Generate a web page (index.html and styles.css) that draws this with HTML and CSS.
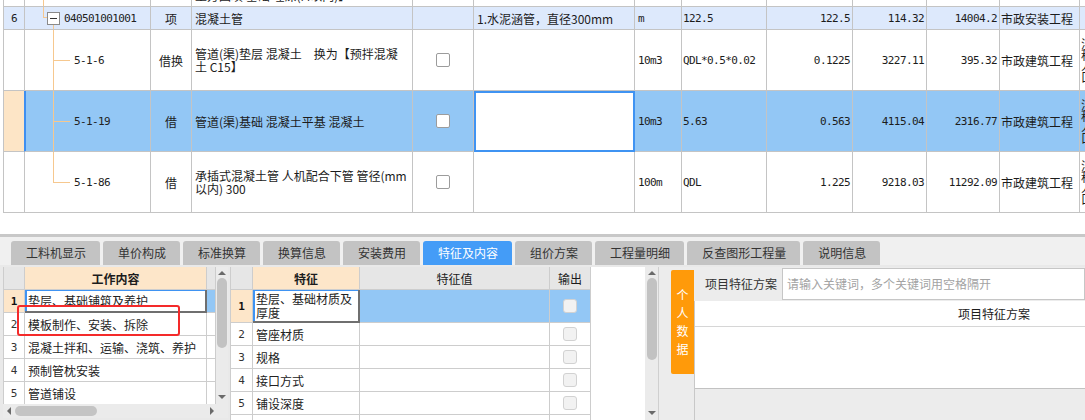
FILE: index.html
```html
<!DOCTYPE html>
<html lang="zh">
<head>
<meta charset="utf-8">
<title>清单定额</title>
<link rel="stylesheet" href="styles.css">
</head>
<body>
<div class="sheet">
  <div class="row r-partial">
    <div class="c"></div>
    <div class="c tree-top"></div>
    <div class="c"></div>
    <div class="c clip"><span class="cliptext">土方回填 基础 埋深(M以内)】</span></div>
    <div class="c"></div><div class="c"></div><div class="c"></div><div class="c"></div>
    <div class="c"></div><div class="c"></div><div class="c"></div><div class="c"></div><div class="c last"></div>
  </div>
  <div class="row r-parent">
    <div class="c center num">6</div>
    <div class="c code-root"><span class="tog"><span class="minus"></span></span><span class="num code">040501001001</span></div>
    <div class="c center">项</div>
    <div class="c">混凝土管</div>
    <div class="c"></div>
    <div class="c">1.水泥涵管，直径300mm</div>
    <div class="c num">m</div>
    <div class="c num tight">122.5</div>
    <div class="c num right">122.5</div>
    <div class="c num right">114.32</div>
    <div class="c num right">14004.2</div>
    <div class="c cat">市政安装工程</div>
    <div class="c last"></div>
  </div>
  <div class="row r-child">
    <div class="c"></div>
    <div class="c code-child"><span class="branch"></span><span class="num code">5-1-6</span></div>
    <div class="c center">借换</div>
    <div class="c wrap">管道(渠)垫层 混凝土　换为【预拌混凝<br>土 C15】</div>
    <div class="c center"><span class="cb"></span></div>
    <div class="c"></div>
    <div class="c num">10m3</div>
    <div class="c num tight">QDL*0.5*0.02</div>
    <div class="c num right">0.1225</div>
    <div class="c num right">3227.11</div>
    <div class="c num right">395.32</div>
    <div class="c cat">市政建筑工程</div>
    <div class="c last"><span class="vtext">浇程人口</span></div>
  </div>
  <div class="row r-child r-sel">
    <div class="c rowhead"></div>
    <div class="c code-child sel-left"><span class="branch"></span><span class="num code">5-1-19</span></div>
    <div class="c center">借</div>
    <div class="c wrap">管道(渠)基础 混凝土平基 混凝土</div>
    <div class="c center"><span class="cb"></span></div>
    <div class="c edit"></div>
    <div class="c num">10m3</div>
    <div class="c num tight">5.63</div>
    <div class="c num right">0.563</div>
    <div class="c num right">4115.04</div>
    <div class="c num right">2316.77</div>
    <div class="c cat">市政建筑工程</div>
    <div class="c last"><span class="vtext">浇程人口</span></div>
  </div>
  <div class="row r-child">
    <div class="c"></div>
    <div class="c code-child"><span class="branch branch-end"></span><span class="num code">5-1-86</span></div>
    <div class="c center">借</div>
    <div class="c wrap">承插式混凝土管 人机配合下管 管径(mm<br>以内) 300</div>
    <div class="c center"><span class="cb"></span></div>
    <div class="c"></div>
    <div class="c num">100m</div>
    <div class="c num tight">QDL</div>
    <div class="c num right">1.225</div>
    <div class="c num right">9218.03</div>
    <div class="c num right">11292.09</div>
    <div class="c cat">市政建筑工程</div>
    <div class="c last"><span class="vtext">浇程人口</span></div>
  </div>
</div>

<div class="splitter"></div>

<div class="tabs">
  <div class="tab">工料机显示</div>
  <div class="tab">单价构成</div>
  <div class="tab">标准换算</div>
  <div class="tab">换算信息</div>
  <div class="tab">安装费用</div>
  <div class="tab on">特征及内容</div>
  <div class="tab">组价方案</div>
  <div class="tab">工程量明细</div>
  <div class="tab">反查图形工程量</div>
  <div class="tab">说明信息</div>
</div>

<div class="bottom">
  <div class="work">
    <div class="wgrid">
      <div class="wtable">
        <div class="wrow whead">
          <div class="w hnum"></div>
          <div class="w htitle">工作内容</div>
          <div class="w hnum"></div>
        </div>
        <div class="wrow">
          <div class="w rnum rsel">1</div>
          <div class="w wtxt focus">垫层、基础铺筑及养护</div>
          <div class="w bluecell"></div>
        </div>
        <div class="wrow">
          <div class="w rnum">2</div>
          <div class="w wtxt">模板制作、安装、拆除</div>
          <div class="w"></div>
        </div>
        <div class="wrow">
          <div class="w rnum">3</div>
          <div class="w wtxt">混凝土拌和、运输、浇筑、养护</div>
          <div class="w"></div>
        </div>
        <div class="wrow">
          <div class="w rnum">4</div>
          <div class="w wtxt">预制管枕安装</div>
          <div class="w"></div>
        </div>
        <div class="wrow">
          <div class="w rnum">5</div>
          <div class="w wtxt">管道铺设</div>
          <div class="w"></div>
        </div>
      </div>
      <div class="vs">
        <span class="up"></span>
        <span class="thumb t1"></span>
        <span class="down"></span>
      </div>
    </div>
    <div class="hs">
      <span class="left"></span>
      <span class="hthumb"></span>
      <span class="rightarr"></span>
    </div>
    <div class="mark"></div>
  </div>

  <div class="feat">
    <div class="ftable">
      <div class="frow fhead">
        <div class="w hnum"></div>
        <div class="w htitle">特征</div>
        <div class="w hgrey">特征值</div>
        <div class="w hgrey">输出</div>
      </div>
      <div class="frow frow1">
        <div class="w rnum rsel">1</div>
        <div class="w wtxt focus wrapcell">垫层、基础材质及厚度</div>
        <div class="w bluecell"></div>
        <div class="w bluecell center"><span class="gcb"></span></div>
      </div>
      <div class="frow">
        <div class="w rnum">2</div>
        <div class="w wtxt">管座材质</div>
        <div class="w"></div>
        <div class="w center"><span class="gcb"></span></div>
      </div>
      <div class="frow">
        <div class="w rnum">3</div>
        <div class="w wtxt">规格</div>
        <div class="w"></div>
        <div class="w center"><span class="gcb"></span></div>
      </div>
      <div class="frow">
        <div class="w rnum">4</div>
        <div class="w wtxt">接口方式</div>
        <div class="w"></div>
        <div class="w center"><span class="gcb"></span></div>
      </div>
      <div class="frow">
        <div class="w rnum">5</div>
        <div class="w wtxt">铺设深度</div>
        <div class="w"></div>
        <div class="w center"><span class="gcb"></span></div>
      </div>
      <div class="frow">
        <div class="w rnum"></div>
        <div class="w"></div>
        <div class="w"></div>
        <div class="w"></div>
      </div>
    </div>
    <div class="vs vs2">
      <span class="up"></span>
      <span class="thumb t2"></span>
      <span class="down"></span>
    </div>
  </div>

  <div class="scheme">
    <div class="side">
      <div class="ptab">个人数据</div>
    </div>
    <div class="main">
      <div class="bar">
        <div class="lbl">项目特征方案</div>
        <div class="inp">请输入关键词，多个关键词用空格隔开</div>
      </div>
      <div class="tbl">
        <div class="th">项目特征方案</div>
        <div class="tb"></div>
      </div>
    </div>
  </div>
</div>
</body>
</html>
```

FILE: styles.css
```css
* { box-sizing: border-box; margin: 0; padding: 0; }

body {
  width: 1085px;
  height: 420px;
  overflow: hidden;
  background: #fff;
  font-family: "Noto Sans CJK SC", sans-serif;
  font-size: 12px;
  line-height: 13px;
  color: #1c1c1c;
}

/* ---------- top sheet ---------- */
.sheet {
  margin-left: 3px;
  width: 1136px;
  border-left: 1px solid #c4c4c4;
}

.row {
  display: grid;
  grid-template-columns: 21px 126px 41px 221px 61px 161px 47px 85px 86px 74px 73px 80px 60px;
}

.r-partial { height: 7px; }
.r-parent { height: 23px; background: #dde9fc; }
.r-child { height: 61px; }
.r-sel { background: #93c7f5; }

.c {
  display: flex;
  align-items: center;
  padding: 0 3px;
  border-right: 1px solid #c4c4c4;
  border-bottom: 1px solid #c4c4c4;
  overflow: hidden;
  white-space: nowrap;
}

.c.wrap { white-space: normal; }
.c.center { justify-content: center; }
.c.right { justify-content: flex-end; padding-right: 2px; }
.c.tight { padding-left: 1px; }
.c.cat { padding-left: 1px; }
.c.last { border-right: none; padding-left: 1px; }

.num {
  font-family: "DejaVu Sans Mono", monospace;
  font-size: 11px;
  letter-spacing: -0.6px;
}

.c.clip { align-items: flex-end; }
.cliptext { line-height: 12px; margin-bottom: 4px; flex: none; }

.vtext {
  width: 12px;
  white-space: normal;
  word-break: break-all;
  line-height: 11px;
}

/* tree */
.tree-top {
  background: linear-gradient(#f6c88f, #f6c88f) 18px 0 / 1px 100% no-repeat;
}

.code-root {
  padding-left: 22px;
  background:
    linear-gradient(#f6c88f, #f6c88f) 18px 0 / 1px 11px no-repeat,
    linear-gradient(#f6c88f, #f6c88f) 18px 10px / 4px 1px no-repeat,
    linear-gradient(#f6c88f, #f6c88f) 28px 17px / 1px 10px no-repeat;
}

.tog {
  width: 13px;
  height: 13px;
  border: 1px solid #8a8a8a;
  background: #fff;
  display: flex;
  align-items: center;
  justify-content: center;
  margin-right: 4px;
  flex: none;
}

.minus { width: 7px; height: 1px; background: #333; }

.code-child { padding-left: 28px; }

.branch {
  align-self: stretch;
  width: 17px;
  margin-right: 4px;
  flex: none;
  background:
    linear-gradient(#f6c88f, #f6c88f) 0 0 / 1px 100% no-repeat,
    linear-gradient(#f6c88f, #f6c88f) 0 50% / 100% 1px no-repeat;
}

.branch-end {
  background:
    linear-gradient(#f6c88f, #f6c88f) 0 0 / 1px 50% no-repeat,
    linear-gradient(#f6c88f, #f6c88f) 0 50% / 100% 1px no-repeat;
}

.code { color: #222; }

.cb {
  width: 14px;
  height: 14px;
  border: 1px solid #9c9c9c;
  border-radius: 2px;
  background: #fff;
}

.rowhead { background: #fde5c6; border-right-color: #3f8ff0; }
.sel-left { box-shadow: inset 1px 0 0 #3f8ff0; }

.edit {
  background: #fff;
  border-right: 2px solid #3f93f2;
  border-bottom: 2px solid #3f93f2;
  box-shadow: inset 2px 2px 0 #3f93f2;
}

/* ---------- splitter & tabs ---------- */
.splitter {
  margin-top: 21px;
  height: 3px;
  background: #c8c8c8;
}

.tabs {
  height: 28px;
  background: #f0f0f0;
  display: flex;
  align-items: flex-end;
  gap: 3px;
  padding-left: 11px;
}

.tab {
  height: 24px;
  padding: 0 14px 0 15px;
  background: #c3c3c3;
  border-radius: 3px 3px 0 0;
  color: #333;
  line-height: 24px;
  white-space: nowrap;
}

.tab.on { background: #449cf7; color: #fff; }

/* ---------- bottom ---------- */
.bottom {
  height: 155px;
  background: #e9e9e9;
  display: flex;
  padding: 2px 0 0 3px;
}

.work {
  position: relative;
  width: 225px;
  display: flex;
  flex-direction: column;
}

.wgrid { display: flex; height: 137px; }

.wtable {
  width: 213px;
  border-left: 1px solid #cdcdcd;
  background: #fff;
  overflow: hidden;
}

.wrow {
  display: grid;
  grid-template-columns: 21px 182px 9px;
  height: 23px;
}

.w {
  display: flex;
  align-items: center;
  border-right: 1px solid #cdcdcd;
  border-bottom: 1px solid #cdcdcd;
  overflow: hidden;
  white-space: nowrap;
}

.w.center { justify-content: center; }

.hnum, .hgrey { background: #e6e6e6; justify-content: center; }
.htitle { background: #fde6c9; justify-content: center; font-weight: bold; }

.rnum {
  justify-content: center;
  font-family: "DejaVu Sans Mono", monospace;
  font-size: 11px;
  color: #333;
}

.rsel { background: #fde6c9; font-weight: bold; color: #111; }

.wtxt { padding-left: 3px; color: #222; }

.focus {
  border-right: 2px solid #6f6f6f;
  border-bottom: 2px solid #6f6f6f;
  box-shadow: inset 2px 1px 0 #3f93f2;
}

.bluecell { background: #93c7f5; }

.vs {
  width: 12px;
  background: #ebebeb;
  display: flex;
  flex-direction: column;
  align-items: center;
  padding: 4px 0 5px;
}

.up {
  width: 0;
  height: 0;
  border-left: 4px solid transparent;
  border-right: 4px solid transparent;
  border-bottom: 4px solid #6a6a6a;
}

.down {
  margin-top: auto;
  width: 0;
  height: 0;
  border-left: 4px solid transparent;
  border-right: 4px solid transparent;
  border-top: 4px solid #6a6a6a;
}

.thumb {
  margin-top: 3px;
  width: 10px;
  border-radius: 5px;
  background: #c2c2c2;
}

.t1 { height: 70px; }
.t2 { height: 82px; }

.hs {
  height: 14px;
  background: #ebebeb;
  display: flex;
  align-items: center;
  padding-left: 4px;
}

.left {
  width: 0;
  height: 0;
  border-top: 4px solid transparent;
  border-bottom: 4px solid transparent;
  border-right: 4px solid #6a6a6a;
}

.hthumb {
  margin-left: 4px;
  width: 82px;
  height: 10px;
  border-radius: 5px;
  background: #c4c4c4;
}

.rightarr {
  margin-left: auto;
  margin-right: 14px;
  width: 0;
  height: 0;
  border-top: 4px solid transparent;
  border-bottom: 4px solid transparent;
  border-left: 4px solid #6a6a6a;
}

.mark {
  position: absolute;
  left: 14px;
  top: 38px;
  width: 163px;
  height: 31px;
  border: 2px solid #f42a2a;
  border-radius: 3px;
}

/* feature grid */
.feat {
  margin-left: 2px;
  width: 428px;
  display: flex;
}

.ftable {
  width: 415px;
  border-left: 1px solid #cdcdcd;
  background: #fff;
  overflow: hidden;
}

.frow {
  display: grid;
  grid-template-columns: 22px 107px 190px 41px;
  width: 360px;
  height: 23px;
}

.frow1 { height: 33px; }

.wrapcell {
  white-space: normal;
  line-height: 14px;
  padding-right: 4px;
}

.gcb {
  width: 14px;
  height: 14px;
  border: 1px solid #d2d2d2;
  border-radius: 3px;
  background: #f2f2f2;
}

.vs2 { width: 13px; }

/* scheme panel */
.scheme {
  flex: 1;
  display: flex;
  border-left: 1px solid #cfcfcf;
  background: #ececec;
}

.side {
  width: 35px;
  padding: 3px 0 0 12px;
  flex: none;
}

.ptab {
  width: 23px;
  height: 104px;
  background: #ff9a0a;
  color: #fff;
  border-radius: 2px 0 0 2px;
  text-align: center;
  padding-top: 16px;
  line-height: 18px;
  word-break: break-all;
}

.main {
  flex: 1;
  display: flex;
  flex-direction: column;
}

.bar {
  height: 34px;
  display: flex;
  padding-top: 1px;
}

.lbl {
  width: 88px;
  flex: none;
  padding-left: 11px;
  line-height: 32px;
  color: #333;
  white-space: nowrap;
}

.inp {
  flex: 1;
  height: 32px;
  border: 1px solid #c6c6c6;
  background: #fff;
  padding-left: 4px;
  line-height: 30px;
  color: #a3a3a3;
  white-space: nowrap;
}

.tbl {
  flex: 1;
  border-left: 1px solid #c8c8c8;
  display: flex;
  flex-direction: column;
}

.th {
  height: 26px;
  background: #fff;
  border-bottom: 1px solid #d6d6d6;
  padding-left: 263px;
  line-height: 25px;
  color: #1c1c1c;
  white-space: nowrap;
}

.tb {
  height: 62px;
  background: #fff;
  border-bottom: 1px solid #c2c2c2;
}
```
